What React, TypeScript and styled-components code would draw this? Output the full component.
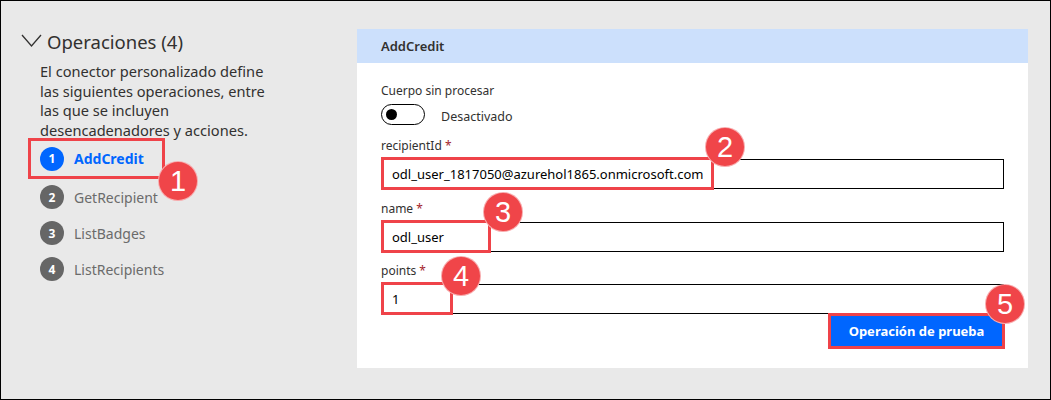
import React from "react";
import styled, { createGlobalStyle } from "styled-components";

const GlobalStyle = createGlobalStyle`
  html, body {
    margin: 0;
    padding: 0;
    background: #ffffff;
  }
  body {
    font-family: "Noto Sans", "Open Sans", sans-serif;
    color: #323130;
  }
`;

const Frame = styled.div`
  box-sizing: border-box;
  width: 1051px;
  height: 400px;
  border: 1px solid #000;
  background: #e9e9e9;
  display: flex;
  overflow: hidden;
`;

const Sidebar = styled.div`
  width: 356px;
  padding: 28px 0 0 20px;
  box-sizing: border-box;
`;

const SectionTitle = styled.div`
  display: flex;
  align-items: center;
  gap: 4px;
  height: 24px;
  font-size: 18.5px;
  color: #323130;
`;

const Description = styled.p`
  margin: 9px 0 0 19px;
  width: 226px;
  font-size: 14.6px;
  line-height: 19.5px;
  color: #323130;
`;

const OpList = styled.div`
  margin: -2px 0 0 7px;
  display: flex;
  flex-direction: column;
  align-items: flex-start;
`;

const OpItem = styled.div<{ $marked?: boolean }>`
  position: relative;
  display: flex;
  align-items: center;
  gap: 10px;
  box-sizing: border-box;
  height: ${({ $marked }) => ($marked ? "41px" : "36px")};
  width: ${({ $marked }) => ($marked ? "137px" : "auto")};
  padding-left: ${({ $marked }) => ($marked ? "9px" : "12px")};
  border: ${({ $marked }) => ($marked ? "3px solid #ef4349" : "none")};
`;

const StepDot = styled.span<{ $active?: boolean }>`
  width: 24px;
  height: 24px;
  border-radius: 50%;
  background: ${({ $active }) => ($active ? "#0066ff" : "#666666")};
  color: #fff;
  font-size: 12px;
  font-weight: 700;
  display: flex;
  align-items: center;
  justify-content: center;
`;

const OpName = styled.span<{ $active?: boolean }>`
  font-size: 14px;
  font-weight: ${({ $active }) => ($active ? 700 : 400)};
  color: ${({ $active }) => ($active ? "#0066ff" : "#6b6b6b")};
`;

const Panel = styled.div`
  margin-top: 28px;
  width: 671px;
  height: 339px;
  background: #fff;
  display: flex;
  flex-direction: column;
`;

const PanelHeader = styled.div`
  height: 34px;
  background: #cce0fc;
  display: flex;
  align-items: center;
  padding-left: 24px;
  font-size: 13px;
  font-weight: 600;
  color: #323130;
`;

const PanelBody = styled.div`
  padding: 20px 24px 0 24px;
  display: flex;
  flex-direction: column;
`;

const Label = styled.div<{ $gap?: number }>`
  font-size: 12px;
  line-height: 16px;
  color: #323130;
  margin-top: ${({ $gap }) => $gap ?? 0}px;
`;

const Required = styled.span`
  color: #a4262c;
`;

const ToggleRow = styled.div`
  display: flex;
  align-items: center;
  gap: 16px;
  margin-top: 5px;
  height: 21px;
  font-size: 12.5px;
`;

const ToggleTrack = styled.span`
  box-sizing: border-box;
  width: 44px;
  height: 21px;
  border: 1px solid #000;
  border-radius: 11px;
  display: flex;
  align-items: center;
  padding-left: 4px;
`;

const ToggleKnob = styled.span`
  width: 11px;
  height: 11px;
  border-radius: 50%;
  background: #000;
`;

const ToggleText = styled.span`
  padding-top: 3px;
  color: #323130;
`;

const Field = styled.div`
  box-sizing: border-box;
  margin-top: 5px;
  height: 30px;
  border: 1px solid #000;
  display: flex;
  align-items: stretch;
`;

const Mark = styled.span<{ $width?: number }>`
  position: relative;
  box-sizing: border-box;
  width: ${({ $width }) => ($width ? `${$width}px` : "auto")};
  margin: -3px 0 -2px -1px;
  padding: 0 8px;
  border: 3px solid #ef4349;
  display: flex;
  align-items: center;
  font-size: 13px;
  color: #000;
`;

const Footer = styled.div`
  display: flex;
  justify-content: flex-end;
  margin: -1px -1px 0 0;
`;

const ButtonMark = styled.span`
  position: relative;
  border: 3px solid #ef4349;
  display: flex;
`;

const TestButton = styled.button`
  width: 171px;
  height: 30px;
  border: none;
  background: #0066ff;
  color: #fff;
  font-family: "Noto Sans", sans-serif;
  font-size: 13px;
  font-weight: 700;
  cursor: pointer;
`;

const Badge = styled.span<{ $top: number; $right: number }>`
  position: absolute;
  top: ${({ $top }) => $top}px;
  right: ${({ $right }) => $right}px;
  box-sizing: border-box;
  width: 40px;
  height: 40px;
  border-radius: 50%;
  background: #f04549;
  border: 1px solid rgba(255, 255, 255, 0.55);
  color: #fff;
  font-family: "Liberation Sans", Arial, sans-serif;
  font-size: 29px;
  line-height: 1;
  display: flex;
  align-items: center;
  justify-content: center;
  z-index: 2;
`;

const operations = ["AddCredit", "GetRecipient", "ListBadges", "ListRecipients"];

const Chevron = () => (
  <svg width="22" height="14" viewBox="0 0 22 14">
    <polyline points="1,1 10.5,12 20,1" fill="none" stroke="#323130" strokeWidth="1.3" />
  </svg>
);

export default function App() {
  return (
    <>
      <GlobalStyle />
      <Frame>
        <Sidebar>
          <SectionTitle>
            <Chevron />
            Operaciones (4)
          </SectionTitle>
          <Description>
            El conector personalizado define las siguientes operaciones, entre las que se incluyen
            desencadenadores y acciones.
          </Description>
          <OpList>
            {operations.map((op, i) => (
              <OpItem key={op} $marked={i === 0}>
                <StepDot $active={i === 0}>{i + 1}</StepDot>
                <OpName $active={i === 0}>{op}</OpName>
                {i === 0 && (
                  <Badge $top={20} $right={-36}>
                    1
                  </Badge>
                )}
              </OpItem>
            ))}
          </OpList>
        </Sidebar>

        <Panel>
          <PanelHeader>AddCredit</PanelHeader>
          <PanelBody>
            <Label>Cuerpo sin procesar</Label>
            <ToggleRow>
              <ToggleTrack>
                <ToggleKnob />
              </ToggleTrack>
              <ToggleText>Desactivado</ToggleText>
            </ToggleRow>

            <Label $gap={13}>
              recipientId <Required>*</Required>
            </Label>
            <Field>
              <Mark $width={333}>
                odl_user_1817050@azurehol1865.onmicrosoft.com
                <Badge $top={-33} $right={-34}>
                  2
                </Badge>
              </Mark>
            </Field>

            <Label $gap={12}>
              name <Required>*</Required>
            </Label>
            <Field>
              <Mark $width={110}>
                odl_user
                <Badge $top={-31} $right={-35}>
                  3
                </Badge>
              </Mark>
            </Field>

            <Label $gap={11}>
              points <Required>*</Required>
            </Label>
            <Field>
              <Mark $width={72}>
                1
                <Badge $top={-29} $right={-31}>
                  4
                </Badge>
              </Mark>
            </Field>

            <Footer>
              <ButtonMark>
                <TestButton>Operación de prueba</TestButton>
                <Badge $top={-32} $right={-23}>
                  5
                </Badge>
              </ButtonMark>
            </Footer>
          </PanelBody>
        </Panel>
      </Frame>
    </>
  );
}
